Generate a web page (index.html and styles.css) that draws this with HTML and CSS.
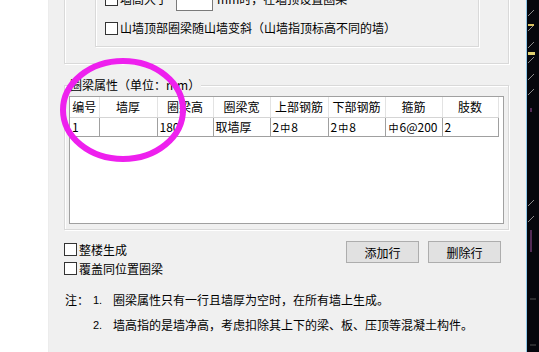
FILE: index.html
```html
<!DOCTYPE html>
<html lang="zh-CN">
<head>
<meta charset="utf-8">
<title>圈梁设置</title>
<link rel="stylesheet" href="styles.css">
</head>
<body>
<div class="screen">
  <div class="side"></div>
  <div class="dialog">
    <div class="group g1">
      <div class="group g1-inner">
        <div class="row">
          <span class="cb"></span><span class="lbl">墙高大于</span><span class="input"></span><span class="lbl2">mm时，在墙顶设置圈梁</span>
        </div>
        <div class="row">
          <span class="cb"></span><span class="lbl">山墙顶部圈梁随山墙变斜（山墙指顶标高不同的墙）</span>
        </div>
      </div>
    </div>

    <div class="group g2">
      <div class="legend">圈梁属性（单位：mm）</div>
      <div class="list">
        <table class="grid">
          <thead>
            <tr><th>编号</th><th>墙厚</th><th>圈梁高</th><th>圈梁宽</th><th>上部钢筋</th><th>下部钢筋</th><th>箍筋</th><th>肢数</th></tr>
          </thead>
          <tbody>
            <tr><td>1</td><td></td><td>180</td><td>取墙厚</td><td>2<span class="rb">中</span>8</td><td>2<span class="rb">中</span>8</td><td><span class="rb">中</span>6@200</td><td>2</td></tr>
          </tbody>
        </table>
      </div>
    </div>

    <div class="controls">
      <div class="checks">
        <div class="row2"><span class="cb"></span><span class="lbl">整楼生成</span></div>
        <div class="row2"><span class="cb"></span><span class="lbl">覆盖同位置圈梁</span></div>
      </div>
      <div class="buttons">
        <button class="btn">添加行</button>
        <button class="btn">删除行</button>
      </div>
    </div>

    <div class="notes">
      <span class="nh">注：</span><span class="nn">1.</span><span class="nt">圈梁属性只有一行且墙厚为空时，在所有墙上生成。</span>
      <span class="nh"></span><span class="nn">2.</span><span class="nt">墙高指的是墙净高，考虑扣除其上下的梁、板、压顶等混凝土构件。</span>
    </div>
  </div>
  <div class="canvas">
    <svg class="ticks" width="13" height="352" viewBox="0 0 13 352">
      <g stroke="#8a8a8a" stroke-width="1">
        <line x1="1" y1="16" x2="7" y2="10"/>
        <line x1="1" y1="31" x2="7" y2="25"/>
        <line x1="1" y1="48" x2="7" y2="42"/>
        <line x1="1" y1="63" x2="7" y2="57"/>
        <line x1="1" y1="80" x2="7" y2="74"/>
        <line x1="1" y1="95" x2="7" y2="89"/>
        <line x1="1" y1="206" x2="7" y2="200"/>
        <line x1="1" y1="222" x2="7" y2="216"/>
      </g>
      <rect x="1" y="24" width="6" height="2" fill="#d8c060"/>
      <rect x="1" y="52" width="7" height="3" fill="#e0d070"/>
      <g stroke="#a050a0" stroke-width="1">
        <line x1="4" y1="108" x2="4" y2="112"/>
        <line x1="4" y1="230" x2="4" y2="252"/>
      </g>
      <g stroke="#505050" stroke-width="1">
        <line x1="3" y1="299" x2="9" y2="299"/>
        <line x1="3" y1="345" x2="9" y2="345"/>
      </g>
    </svg>
  </div>
  <svg class="mark" width="539" height="352" viewBox="0 0 539 352">
    <ellipse cx="123" cy="110" rx="60" ry="49" fill="none" stroke="#ee20ee" stroke-width="6"/>
  </svg>
</div>
</body>
</html>
```

FILE: styles.css
```css
* { box-sizing: border-box; }

html, body {
  margin: 0;
  padding: 0;
  background: #ffffff;
}

body {
  font-family: "Noto Sans CJK SC", "Noto Sans", sans-serif;
  font-size: 12px;
  color: #000;
}

.screen {
  position: relative;
  display: flex;
  width: 539px;
  height: 352px;
  overflow: hidden;
}

.side {
  width: 49px;
  flex: none;
  background: #ffffff;
  border-right: 1px solid #ececec;
}

.dialog {
  width: 477px;
  flex: none;
  height: 352px;
  background: #f0f0f0;
  padding-left: 15px;
  overflow: hidden;
}

.canvas {
  width: 13px;
  flex: none;
  background: #05060c;
  border-left: 1px solid #8fc8ea;
}

.ticks { display: block; }

.group {
  border: 1px solid #d9d9d9;
  box-shadow: inset 1px 1px 0 #ffffff, 1px 1px 0 #ffffff;
}

.g1 {
  width: 445px;
  height: 94px;
  margin-top: -30px;
  padding: 7px 0 0 30px;
}

.g1-inner {
  width: 384px;
  height: 69px;
  padding: 10px 0 0 9px;
  display: flex;
  flex-direction: column;
  gap: 9px;
}

.row {
  height: 20px;
  display: flex;
  align-items: center;
  white-space: nowrap;
}

.cb {
  width: 13px;
  height: 13px;
  flex: none;
  background: #ffffff;
  border: 1px solid #333333;
}

.lbl {
  margin-left: 2px;
  line-height: 14px;
}

.input {
  width: 37px;
  height: 20px;
  margin-left: 8px;
  background: #ffffff;
  border: 1px solid #7a7a7a;
  align-self: flex-end;
  margin-bottom: -2px;
}

.lbl2 {
  margin-left: 4px;
  line-height: 14px;
}

.g2 {
  position: relative;
  width: 445px;
  height: 145px;
  margin-top: 21px;
  padding: 10px 0 0 4px;
}

.legend {
  position: absolute;
  left: 4px;
  top: -8px;
  padding: 0 1px;
  background: #f0f0f0;
  line-height: 14px;
  white-space: nowrap;
}

.list {
  width: 435px;
  height: 128px;
  background: #ffffff;
  border: 1px solid #a0a0a0;
}

.grid {
  border-collapse: collapse;
  table-layout: fixed;
  width: 428px;
}

.grid th, .grid td {
  padding: 0 2px;
  white-space: nowrap;
  overflow: hidden;
  font-weight: normal;
}

.grid th {
  height: 20px;
  text-align: center;
  background: #ffffff;
  border-right: 1px solid #e3e3e3;
  border-bottom: 1px solid #d5d5d5;
}

.grid td {
  height: 19px;
  text-align: left;
  border-right: 1px solid #a0a0a0;
  border-bottom: 1px solid #a0a0a0;
}

.grid th:nth-child(1), .grid td:nth-child(1) { width: 29px; }
.grid th:nth-child(2), .grid td:nth-child(2) { width: 58px; }
.grid th:nth-child(3), .grid td:nth-child(3) { width: 56px; }
.grid th:nth-child(4), .grid td:nth-child(4) { width: 57px; }
.grid th:nth-child(5), .grid td:nth-child(5) { width: 58px; }
.grid th:nth-child(6), .grid td:nth-child(6) { width: 57px; }
.grid th:nth-child(7), .grid td:nth-child(7) { width: 57px; }
.grid th:nth-child(8), .grid td:nth-child(8) { width: 56px; }

.rb {
  font-size: 10px;
  margin: 0 1px;
}

.controls {
  width: 445px;
  margin-top: 10px;
  display: flex;
  justify-content: space-between;
  align-items: flex-start;
  padding-right: 8px;
}

.checks {
  display: flex;
  flex-direction: column;
}

.row2 {
  height: 19px;
  display: flex;
  align-items: center;
  white-space: nowrap;
}

.buttons {
  display: flex;
  gap: 9px;
  margin-top: 1px;
}

.btn {
  width: 73px;
  height: 22px;
  padding: 0;
  font: inherit;
  color: #000;
  background: #e1e1e1;
  border: 1px solid #adadad;
  border-radius: 0;
}

.notes {
  margin-top: 9px;
  padding-left: 1px;
  display: grid;
  grid-template-columns: 28px 20px auto;
  grid-auto-rows: 25px;
  align-items: center;
  white-space: nowrap;
}

.nn {
  font-family: "Liberation Sans", sans-serif;
  font-size: 11px;
}

.mark {
  position: absolute;
  left: 0;
  top: 0;
  pointer-events: none;
}
```
